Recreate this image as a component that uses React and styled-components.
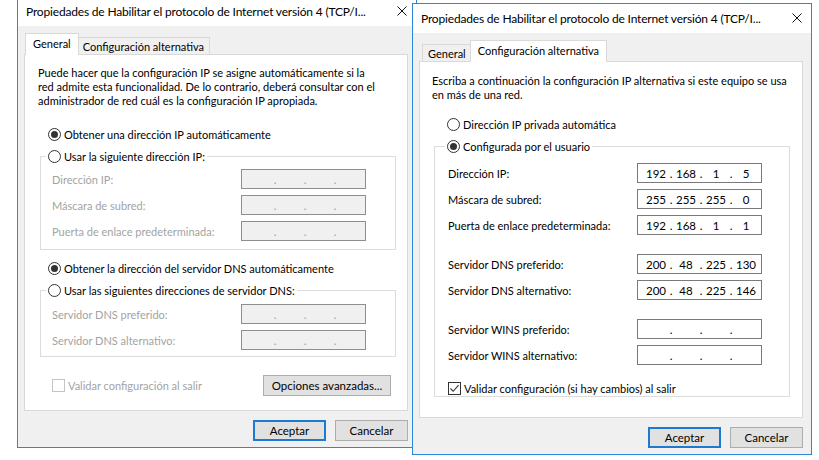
import styled, { createGlobalStyle } from "styled-components";

const GlobalStyle = createGlobalStyle`
  body {
    margin: 0;
    background: #fff;
    font-family: Lato, "Liberation Sans", sans-serif;
    font-size: 11px;
    color: #000;
  }
`;

const Desktop = styled.div`
  position: relative;
  width: 819px;
  height: 460px;
  overflow: hidden;
  background: #fff;
`;

const Window = styled.div`
  position: absolute;
  left: ${(p) => p.$x}px;
  top: ${(p) => p.$y}px;
  width: 400px;
  height: 452px;
  box-sizing: border-box;
  border: 1px solid #2b88d8;
  background: #f0f0f0;
  display: flex;
  flex-direction: column;
`;

const TitleBar = styled.div`
  height: 28px;
  flex: none;
  background: #fff;
  display: flex;
  align-items: center;
  justify-content: space-between;
  padding: 0 9px 1px 8px;
  font-size: 12px;
  letter-spacing: -0.18px;
  white-space: nowrap;
`;

const TabStrip = styled.div`
  display: flex;
  align-items: flex-end;
  height: 21px;
  padding: 7px 0 0 9px;
`;

const Tab = styled.div`
  position: relative;
  box-sizing: border-box;
  height: ${(p) => (p.$active ? 22 : 18)}px;
  margin: 0 ${(p) => (p.$active ? -2 : 0)}px -1px;
  padding: ${(p) => (p.$active ? "0 7px" : "0 5px")};
  border: 1px solid #d9d9d9;
  border-bottom: ${(p) => (p.$active ? "none" : "1px solid #d9d9d9")};
  background: ${(p) => (p.$active ? "#fff" : "#f0f0f0")};
  z-index: ${(p) => (p.$active ? 1 : 0)};
  display: flex;
  align-items: center;
  padding-bottom: ${(p) => (p.$active ? 2 : 0)}px;
`;

const Panel = styled.div`
  width: 384px;
  height: 357px;
  margin-left: 6px;
  box-sizing: border-box;
  border: 1px solid #d9d9d9;
  background: #fff;
  display: flex;
  flex-direction: column;
  padding-top: ${(p) => p.$top}px;
`;

const Description = styled.p`
  margin: 0 0 0 ${(p) => p.$indent}px;
  line-height: 14px;
  white-space: nowrap;
`;

const OptionRow = styled.div`
  display: flex;
  align-items: center;
  gap: 3px;
  height: 16px;
  margin: ${(p) => p.$mt || 0}px 0 0 ${(p) => p.$ml || 0}px;
  color: ${(p) => (p.$disabled ? "#a3a3a3" : "#000")};
  white-space: nowrap;
`;

const RadioMark = styled.span`
  width: 13px;
  height: 13px;
  flex: none;
  box-sizing: border-box;
  border: 1px solid #333;
  border-radius: 50%;
  background: #fff;
  display: flex;
  align-items: center;
  justify-content: center;
  &::after {
    content: "";
    display: ${(p) => (p.$on ? "block" : "none")};
    width: 7px;
    height: 7px;
    border-radius: 50%;
    background: #333;
  }
`;

const CheckMark = styled.span`
  width: 13px;
  height: 13px;
  flex: none;
  box-sizing: border-box;
  border: 1px solid ${(p) => (p.$disabled ? "#c4c4c4" : "#333")};
  background: #fff;
  display: flex;
  align-items: center;
  justify-content: center;
`;

const Group = styled.fieldset`
  width: 356px;
  box-sizing: border-box;
  margin: ${(p) => p.$mt}px 0 0 ${(p) => p.$ml}px;
  padding: 0;
  border: 1px solid #dcdcdc;
  min-inline-size: auto;
`;

const GroupTitle = styled.legend`
  margin-left: ${(p) => p.$indent}px;
  padding: 0 2px;
`;

const GroupBody = styled.div`
  display: flex;
  flex-direction: column;
  gap: 6px;
  padding: ${(p) => p.$pad};
`;

const FieldRow = styled.div`
  display: flex;
  align-items: center;
  justify-content: space-between;
  height: 20px;
  margin-top: ${(p) => p.$gapBefore || 0}px;
  color: ${(p) => (p.$disabled ? "#a3a3a3" : "#000")};
  white-space: nowrap;
`;

const IpBox = styled.div`
  width: 125px;
  height: 20px;
  box-sizing: border-box;
  flex: none;
  display: flex;
  align-items: center;
  padding-left: 5px;
  border: 1px solid ${(p) => (p.$disabled ? "#8e8e8e" : "#7a7a7a")};
  background: ${(p) => (p.$disabled ? "#f0f0f0" : "#fff")};
  color: ${(p) => (p.$disabled ? "#a3a3a3" : "#000")};
  font-size: 11.5px;
`;

const Octet = styled.span`
  width: 26px;
  text-align: center;
`;

const Dot = styled.span`
  width: 4px;
  text-align: center;
`;

const BottomRow = styled.div`
  display: flex;
  align-items: center;
  justify-content: space-between;
  margin-top: 18px;
  padding: 0 16px 0 27px;
`;

const Button = styled.button`
  width: ${(p) => p.$w || 73}px;
  height: 21px;
  box-sizing: border-box;
  padding: 0;
  font: inherit;
  font-size: 11.5px;
  color: #000;
  background: #e1e1e1;
  border: ${(p) => (p.$default ? "2px solid #1a7bd0" : "1px solid #adadad")};
`;

const Footer = styled.div`
  display: flex;
  justify-content: flex-end;
  gap: 9px;
  padding: 9px 8px 0 0;
`;

const CloseIcon = () => (
  <svg width="10" height="10" viewBox="0 0 10 10">
    <path d="M0.5 0.5 L9.5 9.5 M9.5 0.5 L0.5 9.5" stroke="#111" strokeWidth="1" />
  </svg>
);

const Tick = () => (
  <svg width="11" height="11" viewBox="0 0 11 11">
    <path d="M1.5 5.5 L4.2 8.3 L9.6 2.2" fill="none" stroke="#333" strokeWidth="1.1" />
  </svg>
);

const Radio = ({ on, children, ...rest }) => (
  <OptionRow {...rest}>
    <RadioMark $on={on} />
    <span>{children}</span>
  </OptionRow>
);

const IpField = ({ value, disabled }) => {
  const parts = value ? value.split(".") : ["", "", "", ""];
  return (
    <IpBox $disabled={disabled}>
      {parts.map((part, i) => (
        <span key={i} style={{ display: "contents" }}>
          <Octet>{part}</Octet>
          {i < 3 && <Dot>.</Dot>}
        </span>
      ))}
    </IpBox>
  );
};

const Field = ({ label, value, disabled, gapBefore }) => (
  <FieldRow $disabled={disabled} $gapBefore={gapBefore}>
    <span>{label}</span>
    <IpField value={value} disabled={disabled} />
  </FieldRow>
);

const TITLE = "Propiedades de Habilitar el protocolo de Internet versión 4 (TCP/I...";

const Dialog = ({ x, y, tab, children }) => (
  <Window $x={x} $y={y}>
    <TitleBar>
      <span>{TITLE}</span>
      <CloseIcon />
    </TitleBar>
    <TabStrip>
      <Tab $active={tab === 0}>General</Tab>
      <Tab $active={tab === 1}>Configuración alternativa</Tab>
    </TabStrip>
    {children}
    <Footer>
      <Button $default>Aceptar</Button>
      <Button>Cancelar</Button>
    </Footer>
  </Window>
);

const GeneralTab = () => (
  <Panel $top={11}>
    <Description $indent={13}>
      Puede hacer que la configuración IP se asigne automáticamente si la
      <br />
      red admite esta funcionalidad. De lo contrario, deberá consultar con el
      <br />
      administrador de red cuál es la configuración IP apropiada.
    </Description>
    <Radio on $mt={18} $ml={23}>
      Obtener una dirección IP automáticamente
    </Radio>
    <Group $mt={6} $ml={15}>
      <GroupTitle $indent={5}>
        <Radio>Usar la siguiente dirección IP:</Radio>
      </GroupTitle>
      <GroupBody $pad="5px 29px 8px 11px">
        <Field label="Dirección IP:" disabled />
        <Field label="Máscara de subred:" disabled />
        <Field label="Puerta de enlace predeterminada:" disabled />
      </GroupBody>
    </Group>
    <Radio on $mt={10} $ml={23}>
      Obtener la dirección del servidor DNS automáticamente
    </Radio>
    <Group $mt={6} $ml={15}>
      <GroupTitle $indent={5}>
        <Radio>Usar las siguientes direcciones de servidor DNS:</Radio>
      </GroupTitle>
      <GroupBody $pad="6px 29px 6px 11px">
        <Field label="Servidor DNS preferido:" disabled />
        <Field label="Servidor DNS alternativo:" disabled />
      </GroupBody>
    </Group>
    <BottomRow>
      <OptionRow $disabled>
        <CheckMark $disabled />
        <span>Validar configuración al salir</span>
      </OptionRow>
      <Button $w={128}>Opciones avanzadas...</Button>
    </BottomRow>
  </Panel>
);

const AlternateTab = () => (
  <Panel $top={12}>
    <Description $indent={12}>
      Escriba a continuación la configuración IP alternativa si este equipo se usa
      <br />
      en más de una red.
    </Description>
    <Radio $mt={14} $ml={27}>
      Dirección IP privada automática
    </Radio>
    <Group $mt={6} $ml={14}>
      <GroupTitle $indent={10}>
        <Radio on>Configurada por el usuario</Radio>
      </GroupTitle>
      <GroupBody $pad="9px 27px 0 13px">
        <Field label="Dirección IP:" value="192.168.1.5" />
        <Field label="Máscara de subred:" value="255.255.255.0" />
        <Field label="Puerta de enlace predeterminada:" value="192.168.1.1" />
        <Field label="Servidor DNS preferido:" value="200.48.225.130" gapBefore={13} />
        <Field label="Servidor DNS alternativo:" value="200.48.225.146" />
        <Field label="Servidor WINS preferido:" gapBefore={13} />
        <Field label="Servidor WINS alternativo:" />
        <OptionRow $mt={9}>
          <CheckMark>
            <Tick />
          </CheckMark>
          <span>Validar configuración (si hay cambios) al salir</span>
        </OptionRow>
      </GroupBody>
    </Group>
  </Panel>
);

export default function App() {
  return (
    <>
      <GlobalStyle />
      <Desktop>
        <Dialog x={17} y={-4} tab={0}>
          <GeneralTab />
        </Dialog>
        <Dialog x={412} y={3} tab={1}>
          <AlternateTab />
        </Dialog>
      </Desktop>
    </>
  );
}
